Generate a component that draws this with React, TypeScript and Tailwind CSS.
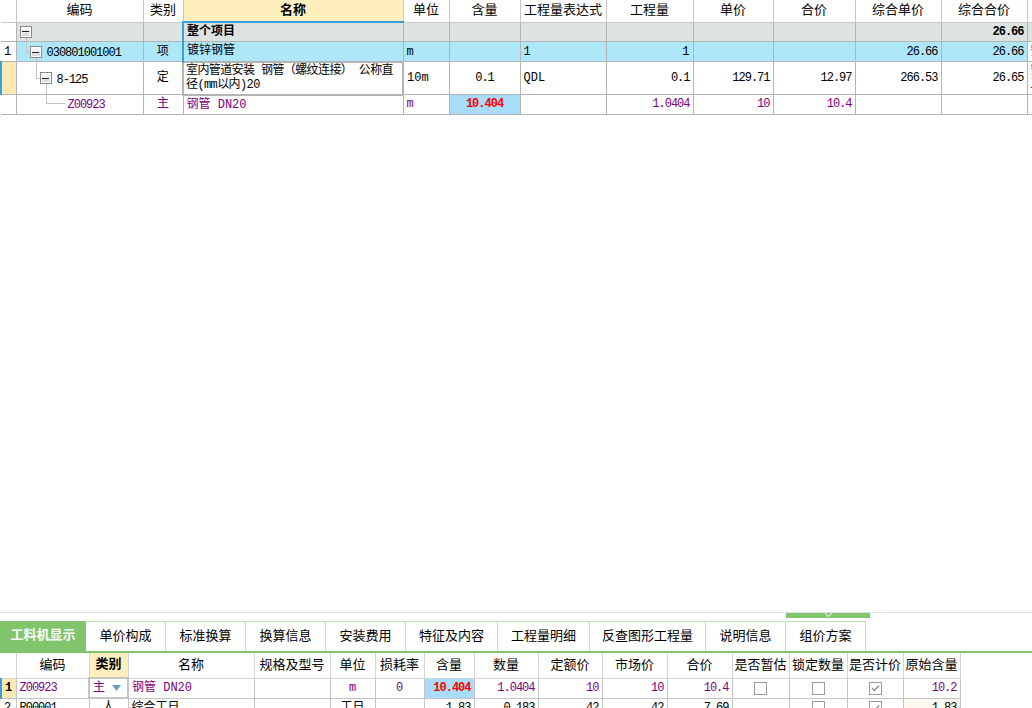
import type { ReactNode } from 'react'

const FONT = "font-['Liberation_Mono','Noto_Sans_CJK_SC',monospace]"
const NUM = 'tracking-[-1px]'
const PURPLE = 'text-[#800080]'

const TreeBox = () => (
  <span className="flex h-[12px] w-[12px] items-center justify-center border border-[#8a8a8a] bg-gradient-to-b from-white to-[#d6d6d6] shadow-[inset_0_0_0_1px_#ffffff]">
    <span className="h-px w-[7px] bg-[#222]" />
  </span>
)

const Line = ({ className }: { className: string }) => (
  <span className={`absolute bg-[#c4c4c4] ${className}`} />
)

const Check = ({ checked }: { checked?: boolean }) => (
  <span className="mx-auto flex h-[13px] w-[13px] items-center justify-center border border-[#9a9a9a] bg-white">
    {checked && (
      <svg width="9" height="8" viewBox="0 0 9 8">
        <path d="M1 4 L3.5 6.5 L8 1.5" fill="none" stroke="#8a8a8a" strokeWidth="1.3" />
      </svg>
    )}
  </span>
)

type TdProps = { children?: ReactNode; className?: string; align?: 'l' | 'c' | 'r'; wrap?: boolean }
const Td = ({ children, className = '', align = 'l', wrap }: TdProps) => (
  <td
    className={`overflow-hidden border border-[#b4b4b4] p-0 px-[3px] ${
      wrap ? 'leading-[14px] break-all whitespace-normal' : 'whitespace-nowrap'
    } ${align === 'c' ? 'text-center' : align === 'r' ? 'text-right' : 'text-left'} ${className}`}
  >
    {children}
  </td>
)

const topHeads = ['', '编码', '类别', '名称', '单位', '含量', '工程量表达式', '工程量', '单价', '合价', '综合单价', '综合合价', '']

const TopTable = () => (
  <div className="overflow-hidden">
    <table className="w-[1067px] table-fixed border-collapse text-[12px] text-black">
      <colgroup>
        {[15, 127, 40, 220, 46, 71, 86, 87, 80, 82, 86, 86, 40].map((w, i) => (
          <col key={i} style={{ width: w }} />
        ))}
      </colgroup>
      <tbody>
        <tr className="h-[22px]">
          {topHeads.map((h, i) => (
            <td
              key={i}
              className={`border border-t-0 border-[#c8c8c8] p-0 text-center text-[13px] ${
                i === 0 ? 'border-l-0' : ''
              } ${i === 3 ? 'border-b-2 border-b-[#3aa0d8] bg-[#ffefbd] font-bold' : 'bg-white'}`}
            >
              {h}
            </td>
          ))}
        </tr>
        <tr className="h-[19px] bg-[#dce3e0]">
          <Td className="border-l-0 bg-white" />
          <Td className="relative">
            <span className="absolute top-[3px] left-[3px]">
              <TreeBox />
            </span>
            <Line className="top-[15px] left-[9px] h-[5px] w-px" />
          </Td>
          <Td />
          <Td className="border-l-2 border-l-[#3aa0d8] font-bold">整个项目</Td>
          <Td />
          <Td />
          <Td />
          <Td />
          <Td />
          <Td />
          <Td />
          <Td align="r" className={`font-bold ${NUM}`}>
            26.66
          </Td>
          <Td />
        </tr>
        <tr className="h-[20px] bg-[#ade7f8]">
          <Td className="border-l-0 bg-white">1</Td>
          <Td className="relative">
            <Line className="top-0 left-[9px] h-[10px] w-px" />
            <Line className="top-[10px] left-[9px] h-px w-[4px]" />
            <span className="absolute top-[4px] left-[13px]">
              <TreeBox />
            </span>
            <Line className="top-[16px] left-[19px] h-[4px] w-px" />
            <span className={`absolute top-[2px] left-[30px] ${NUM}`}>030801001001</span>
          </Td>
          <Td align="c">项</Td>
          <Td className="border-l-2 border-l-[#3aa0d8]">镀锌钢管</Td>
          <Td>m</Td>
          <Td />
          <Td>1</Td>
          <Td align="r">1</Td>
          <Td />
          <Td />
          <Td align="r" className={NUM}>
            26.66
          </Td>
          <Td align="r" className={NUM}>
            26.66
          </Td>
          <Td className="bg-white">安装工程</Td>
        </tr>
        <tr className="h-[33px] bg-white">
          <Td className="border-l-2 border-l-[#3aa0d8] bg-[#fde9b4]" />
          <Td className="relative">
            <Line className="top-0 left-[19px] h-[16px] w-px" />
            <Line className="top-[16px] left-[19px] h-px w-[4px]" />
            <span className="absolute top-[10px] left-[23px]">
              <TreeBox />
            </span>
            <Line className="top-[22px] left-[29px] h-[11px] w-px" />
            <span className={`absolute top-[9px] left-[40px] ${NUM}`}>8-125</span>
          </Td>
          <Td align="c">定</Td>
          <Td wrap className="border-2 border-[#3aa0d8] pl-[2px] tracking-[-0.6px]">
            室内管道安装 钢管（螺纹连接） 公称直径(mm以内)20
          </Td>
          <Td>10m</Td>
          <Td align="c" className={NUM}>
            0.1
          </Td>
          <Td>QDL</Td>
          <Td align="r" className={NUM}>
            0.1
          </Td>
          <Td align="r" className={NUM}>
            129.71
          </Td>
          <Td align="r" className={NUM}>
            12.97
          </Td>
          <Td align="r" className={NUM}>
            266.53
          </Td>
          <Td align="r" className={NUM}>
            26.65
          </Td>
          <Td wrap>安装工程</Td>
        </tr>
        <tr className={`h-[18px] bg-white ${PURPLE}`}>
          <Td className="border-l-0" />
          <Td className="relative">
            <Line className="top-0 left-[29px] h-[8px] w-px" />
            <Line className="top-[8px] left-[29px] h-px w-[19px]" />
            <span className={`absolute top-[1px] left-[51px] ${NUM}`}>Z00923</span>
          </Td>
          <Td align="c">主</Td>
          <Td>钢管 DN20</Td>
          <Td>m</Td>
          <Td align="c" className={`bg-[#a8dcf8] font-bold text-[#ff0000] ${NUM}`}>
            10.404
          </Td>
          <Td />
          <Td align="r" className={NUM}>
            1.0404
          </Td>
          <Td align="r" className={NUM}>
            10
          </Td>
          <Td align="r" className={NUM}>
            10.4
          </Td>
          <Td />
          <Td />
          <Td />
        </tr>
      </tbody>
    </table>
  </div>
)

const tabs = [
  ['工料机显示', 86],
  ['单价构成', 80],
  ['标准换算', 80],
  ['换算信息', 80],
  ['安装费用', 80],
  ['特征及内容', 92],
  ['工程量明细', 92],
  ['反查图形工程量', 116],
  ['说明信息', 80],
  ['组价方案', 80],
] as const

const Tabs = () => (
  <div className="flex h-[30px] text-[13px]">
    {tabs.map(([t, w], i) => (
      <div
        key={t}
        style={{ width: w }}
        className={`flex shrink-0 items-center justify-center ${
          i === 0
            ? 'bg-[#80c46c] font-bold text-white'
            : 'border-t border-r border-[#bfe2b2] bg-white text-black'
        }`}
      >
        {t}
      </div>
    ))}
  </div>
)

const bottomHeads = ['', '编码', '类别', '名称', '规格及型号', '单位', '损耗率', '含量', '数量', '定额价', '市场价', '合价', '是否暂估', '锁定数量', '是否计价', '原始含量']

const BTd = ({ children, className = '', align = 'l' }: TdProps) => (
  <td
    className={`overflow-hidden border border-[#c4c4c4] p-0 px-[3px] whitespace-nowrap ${
      align === 'c' ? 'text-center' : align === 'r' ? 'text-right' : 'text-left'
    } ${className}`}
  >
    {children}
  </td>
)

const BottomTable = () => (
  <table className="w-[959px] table-fixed border-collapse text-[12px] text-black">
    <colgroup>
      {[15, 73, 39, 126, 76, 45, 49, 50, 64, 64, 65, 65, 57, 58, 56, 57].map((w, i) => (
        <col key={i} style={{ width: w }} />
      ))}
    </colgroup>
    <tbody>
      <tr className="h-[25px]">
        {bottomHeads.map((h, i) => (
          <td
            key={i}
            className={`border border-t-0 border-[#d4d4d4] p-0 text-center text-[13px] ${
              i === 0 ? 'border-l-0' : ''
            } ${i === 2 ? 'bg-[#ffefbd] font-bold' : 'bg-white'}`}
          >
            {h}
          </td>
        ))}
      </tr>
      <tr className={`h-[19px] ${PURPLE}`}>
        <BTd className="border-l-2 border-l-[#3aa0d8] bg-[#fde9b4] font-bold text-black">1</BTd>
        <BTd className={NUM}>Z00923</BTd>
        <BTd className="border-2 border-[#7a7a7a]">
          <div className="flex items-center justify-between">
            <span>主</span>
            <svg width="9" height="6" viewBox="0 0 9 6" className="mr-[3px]">
              <path d="M0 0 H9 L4.5 6 Z" fill="#6a9cc4" />
            </svg>
          </div>
        </BTd>
        <BTd>钢管 DN20</BTd>
        <BTd />
        <BTd align="c">m</BTd>
        <BTd align="c">0</BTd>
        <BTd align="r" className={`bg-[#a8dcf8] font-bold text-[#ff0000] ${NUM}`}>
          10.404
        </BTd>
        <BTd align="r" className={NUM}>
          1.0404
        </BTd>
        <BTd align="r" className={NUM}>
          10
        </BTd>
        <BTd align="r" className={NUM}>
          10
        </BTd>
        <BTd align="r" className={NUM}>
          10.4
        </BTd>
        <BTd>
          <Check />
        </BTd>
        <BTd>
          <Check />
        </BTd>
        <BTd>
          <Check checked />
        </BTd>
        <BTd align="r" className={NUM}>
          10.2
        </BTd>
      </tr>
      <tr className="h-[19px]">
        <BTd className="border-l-0">2</BTd>
        <BTd className={NUM}>R00001</BTd>
        <BTd align="c">人</BTd>
        <BTd>综合工日</BTd>
        <BTd />
        <BTd align="c">工日</BTd>
        <BTd />
        <BTd align="r" className={NUM}>
          1.83
        </BTd>
        <BTd align="r" className={NUM}>
          0.183
        </BTd>
        <BTd align="r" className={NUM}>
          42
        </BTd>
        <BTd align="r" className={NUM}>
          42
        </BTd>
        <BTd align="r" className={NUM}>
          7.69
        </BTd>
        <BTd />
        <BTd>
          <Check />
        </BTd>
        <BTd>
          <Check checked />
        </BTd>
        <BTd align="r" className={`bg-[#fdf8f0] ${NUM}`}>
          1.83
        </BTd>
      </tr>
    </tbody>
  </table>
)

export default function App() {
  return (
    <div className={`flex h-[708px] w-[1032px] flex-col overflow-hidden bg-white ${FONT}`}>
      <div className="flex-1 overflow-hidden">
        <TopTable />
      </div>
      <div className="h-[9px] shrink-0 border-t border-[#e0e0e0]">
        <div className="ml-[786px] flex h-[5px] w-[84px] items-start justify-center bg-[#80c46c]">
          <svg width="9" height="5" viewBox="0 0 9 5">
            <path d="M1 0 L4.5 3.5 L8 0" fill="none" stroke="#d8eecf" strokeWidth="1.2" />
          </svg>
        </div>
      </div>
      <Tabs />
      <div className="h-[2px] shrink-0 bg-[#80c46c]" />
      <div className="h-[55px] shrink-0 overflow-hidden">
        <BottomTable />
      </div>
    </div>
  )
}
